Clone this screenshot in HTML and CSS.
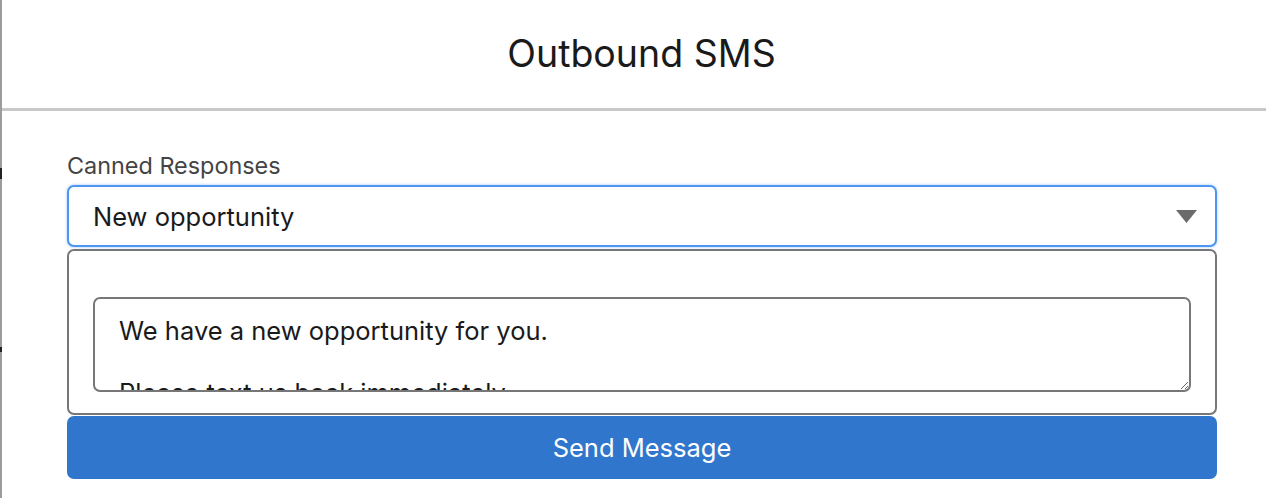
FILE: index.html
```html
<!DOCTYPE html>
<html lang="en">
<head>
<meta charset="utf-8">
<title>Outbound SMS</title>
<link rel="stylesheet" href="styles.css">
</head>
<body>
<div class="page">
  <div class="edge">
    <span class="edge-mark edge-mark-1"></span>
    <span class="edge-mark edge-mark-2"></span>
  </div>
  <main class="panel">
    <header class="panel-header">
      <h1 class="panel-title">Outbound SMS</h1>
    </header>
    <form class="sms-form">
      <label class="field-label" for="canned">Canned Responses</label>
      <div class="select" id="canned" role="combobox" aria-expanded="false" tabindex="0">
        <span class="select-value">New opportunity</span>
        <svg class="select-arrow" width="21" height="13" viewBox="0 0 21 13" aria-hidden="true">
          <path d="M0 0 H21 L10.5 13 Z" fill="#6b6b6b"/>
        </svg>
      </div>
      <div class="message-box">
        <textarea class="message" rows="3">We have a new opportunity for you.

Please text us back immediately.</textarea>
      </div>
      <button type="button" class="send-btn">Send Message</button>
    </form>
  </main>
</div>
</body>
</html>
```
FILE: styles.css
```css
* { box-sizing: border-box; }

html, body {
  margin: 0;
  padding: 0;
  background: #ffffff;
}

body {
  font-family: Inter, "Noto Sans", "Liberation Sans", sans-serif;
  color: #1a1a1a;
}

.page {
  display: flex;
  min-height: 498px;
}

.edge {
  width: 2px;
  flex: 0 0 2px;
  background: #9c9c9c;
  display: flex;
  flex-direction: column;
}

.edge-mark {
  display: block;
  width: 2px;
  background: #222222;
}

.edge-mark-1 {
  margin-top: 168px;
  height: 11px;
}

.edge-mark-2 {
  margin-top: 168px;
  height: 5px;
}

.panel {
  flex: 1;
  display: flex;
  flex-direction: column;
}

.panel-header {
  height: 111px;
  border-bottom: 3px solid #c8c8c8;
  display: flex;
  align-items: center;
  justify-content: center;
  padding-left: 15px;
}

.panel-title {
  margin: 0 0 2px;
  font-size: 37.5px;
  font-weight: 400;
  color: #1a1a1a;
  letter-spacing: 0;
}

.sms-form {
  display: flex;
  flex-direction: column;
  padding: 41px 49px 0 65px;
}

.field-label {
  font-size: 23.4px;
  color: #444444;
  line-height: 28px;
  margin-bottom: 5px;
}

.select {
  height: 62px;
  border: 2px solid #4d96f2;
  border-radius: 7px;
  box-shadow: 0 0 3px rgba(77, 150, 242, 0.55);
  display: flex;
  align-items: center;
  justify-content: space-between;
  padding: 0 18px 0 24px;
  background: #ffffff;
}

.select-value {
  font-size: 25.5px;
  color: #1a1a1a;
}

.select-arrow {
  display: block;
}

.message-box {
  margin-top: 2px;
  border: 2px solid #777777;
  border-radius: 7px;
  padding: 46px 24px 21px;
  height: 166px;
}

.message {
  display: block;
  width: 100%;
  height: 95px;
  border: 2px solid #777777;
  border-radius: 7px;
  padding: 16px 24px 0;
  font-family: inherit;
  font-size: 25.5px;
  line-height: 31px;
  color: #1a1a1a;
  overflow: hidden;
  resize: vertical;
  background: #ffffff;
  outline: none;
}

.send-btn {
  margin-top: 1px;
  height: 63px;
  border: none;
  border-radius: 7px;
  background: #3076cc;
  color: #ffffff;
  font-family: inherit;
  font-size: 25.5px;
  cursor: pointer;
}
```
